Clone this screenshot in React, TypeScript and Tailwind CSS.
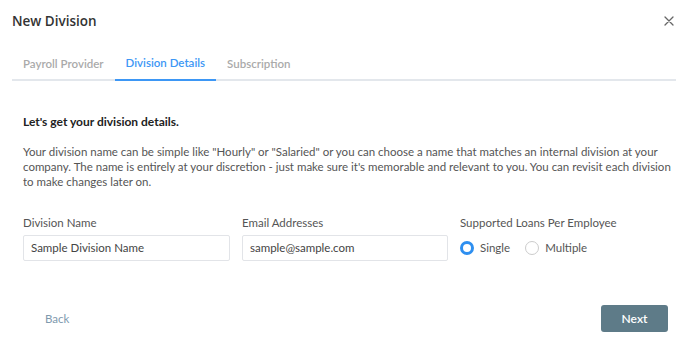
import React from "react";

export default function App() {
  return (
    <div
      className="w-[688px] h-[355px] bg-white text-[#333] relative overflow-hidden"
      style={{ fontFamily: 'Lato, "Open Sans", sans-serif' }}
    >
      <div className="flex items-center justify-between pl-[12px] pr-[14px] pt-[10px] h-[32px]">
        <div className="text-[13.5px] font-semibold text-[#333]" style={{ fontFamily: '"Open Sans", sans-serif' }}>New Division</div>
        <svg width="10" height="10" viewBox="0 0 10 10" className="text-[#666]">
          <path d="M1 1 L9 9 M9 1 L1 9" stroke="currentColor" strokeWidth="1.3" strokeLinecap="round" />
        </svg>
      </div>
      <div className="mx-[12px] mt-[14px] flex border-b-2 border-[#e3e7ec] h-[35px]">
        <div className="px-[11px] flex items-center text-[11.5px] font-semibold text-[#aaa] -mb-[2px]">Payroll Provider</div>
        <div className="px-[11px] flex items-center text-[11.5px] font-semibold text-[#3d97f5] border-b-2 border-[#3d97f5] -mb-[2px]">Division Details</div>
        <div className="px-[11px] flex items-center text-[11.5px] font-semibold text-[#aaa] -mb-[2px]">Subscription</div>
      </div>
      <div className="pl-[23px] pr-[15px]">
        <div className="mt-[33px] text-[12px] font-bold text-[#222] leading-[16px]">Let's get your division details.</div>
        <p className="mt-[14px] text-[11.5px] leading-[15px] text-[#555]">
          Your division name can be simple like "Hourly" or "Salaried" or you can choose a name that matches an internal division at your company. The name is entirely at your discretion - just make sure it's memorable and relevant to you. You can revisit each division to make changes later on.
        </p>
        <div className="mt-[26px] flex gap-[12px] text-[11.5px] text-[#555]">
          <div className="w-[207px]">
            <div className="leading-[16px]">Division Name</div>
            <div className="mt-[4px] h-[26px] border border-[#e2e4e8] rounded-[2px] flex items-center px-[7px] text-[#444]">Sample Division Name</div>
          </div>
          <div className="w-[206px]">
            <div className="leading-[16px]">Email Addresses</div>
            <div className="mt-[4px] h-[26px] border border-[#e2e4e8] rounded-[2px] flex items-center px-[7px] text-[#444]">sample@sample.com</div>
          </div>
          <div>
            <div className="leading-[16px]">Supported Loans Per Employee</div>
            <div className="mt-[4px] h-[26px] flex items-center gap-[6px]">
              <span className="w-[14px] h-[14px] rounded-full border-[3px] border-[#2e8ff0] bg-white"></span>
              <span className="text-[#555]">Single</span>
              <span className="ml-[9px] w-[14px] h-[14px] rounded-full border border-[#ccc] bg-white"></span>
              <span className="text-[#555]">Multiple</span>
            </div>
          </div>
        </div>
      </div>
      <div className="absolute left-0 right-0 top-[305px] flex items-center justify-between pl-[45px] pr-[20px]">
        <div className="text-[11.5px] text-[#7f9aae]">Back</div>
        <div className="w-[67px] h-[27px] rounded-[3px] bg-[#5e7b88] flex items-center justify-center text-white text-[12px] font-semibold">Next</div>
      </div>
    </div>
  );
}
